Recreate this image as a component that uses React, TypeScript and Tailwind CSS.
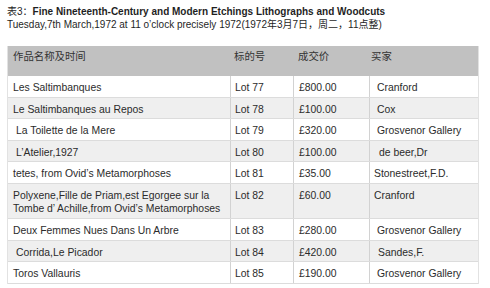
import React from "react";

interface LotRow {
  title: string[];
  indent?: boolean;
  lot: string;
  price: string;
  buyer: string;
  buyerIndent?: number;
  tall?: boolean;
}

const rows: LotRow[] = [
  { title: ["Les Saltimbanques"], lot: "Lot 77", price: "£800.00", buyer: "Cranford", buyerIndent: 7 },
  { title: ["Le Saltimbanques au Repos"], lot: "Lot 78", price: "£100.00", buyer: "Cox", buyerIndent: 7 },
  { title: ["La Toilette de la Mere"], indent: true, lot: "Lot 79", price: "£320.00", buyer: "Grosvenor Gallery", buyerIndent: 7 },
  { title: ["L’Atelier,1927"], indent: true, lot: "Lot 80", price: "£100.00", buyer: "de beer,Dr", buyerIndent: 9 },
  { title: ["tetes, from Ovid’s Metamorphoses"], lot: "Lot 81", price: "£35.00", buyer: "Stonestreet,F.D.", buyerIndent: 4 },
  {
    title: ["Polyxene,Fille de Priam,est Egorgee sur la", "Tombe d’ Achille,from Ovid’s Metamorphoses"],
    lot: "Lot 82",
    price: "£60.00",
    buyer: "Cranford",
    buyerIndent: 4,
    tall: true,
  },
  { title: ["Deux Femmes Nues Dans Un Arbre"], lot: "Lot 83", price: "£280.00", buyer: "Grosvenor Gallery", buyerIndent: 7 },
  { title: ["Corrida,Le Picador"], indent: true, lot: "Lot 84", price: "£420.00", buyer: "Sandes,F.", buyerIndent: 8 },
  { title: ["Toros Vallauris"], lot: "Lot 85", price: "£190.00", buyer: "Grosvenor Gallery", buyerIndent: 7 },
];

const font = {
  fontFamily: '"Liberation Sans", Arial, "Noto Sans CJK SC", sans-serif',
};

function App() {
  return (
    <div className="w-[490px] h-[288px] overflow-hidden bg-white text-[#2b2b2b]" style={font}>
      <div className="pt-[5px] pl-[7px] text-[10px] leading-[13px] text-[#1f1f1f] whitespace-nowrap">
        <p>
          表3：<span className="font-bold">Fine Nineteenth-Century and Modern Etchings Lithographs and Woodcuts</span>
        </p>
        <p>Tuesday,7th March,1972 at 11 o’clock precisely 1972(1972年3月7日，周二，11点整)</p>
      </div>

      <div className="mt-[15px] ml-[7px] w-[472px] border-x border-[#e2e2e2] text-[10.4px] leading-[13px]">
        {/* header */}
        <div className="grid grid-cols-[222px_63px_76px_1fr] h-[30px] bg-[#c1c1c1] text-[#333]">
          <div className="pl-[5px] pt-[4px]">作品名称及时间</div>
          <div className="pl-[4px] pt-[4px]">标的号</div>
          <div className="pl-[5px] pt-[4px]">成交价</div>
          <div className="pl-[2px] pt-[4px]">买家</div>
        </div>

        {rows.map((r, i) => (
          <div
            key={r.lot}
            className={`grid grid-cols-[222px_63px_76px_1fr] border-b border-[#dcdcdc] ${
              i % 2 === 1 ? "bg-[#efefef]" : "bg-white"
            }`}
          >
            <div
              className={`pt-[5px] whitespace-nowrap ${r.indent ? "pl-[8px]" : "pl-[5px]"} ${
                r.tall ? "pb-[3.5px]" : "pb-[2.5px]"
              }`}
            >
              {r.title.map((t) => (
                <div key={t}>{t}</div>
              ))}
            </div>
            <div className="pt-[5px] pl-[4px] border-l border-[#d2d2d2]">{r.lot}</div>
            <div className="pt-[5px] pl-[5px] border-l border-[#d2d2d2]">{r.price}</div>
            <div className="pt-[5px] border-l border-[#d2d2d2]" style={{ paddingLeft: r.buyerIndent }}>
              {r.buyer}
            </div>
          </div>
        ))}
      </div>
    </div>
  );
}

export default App;
